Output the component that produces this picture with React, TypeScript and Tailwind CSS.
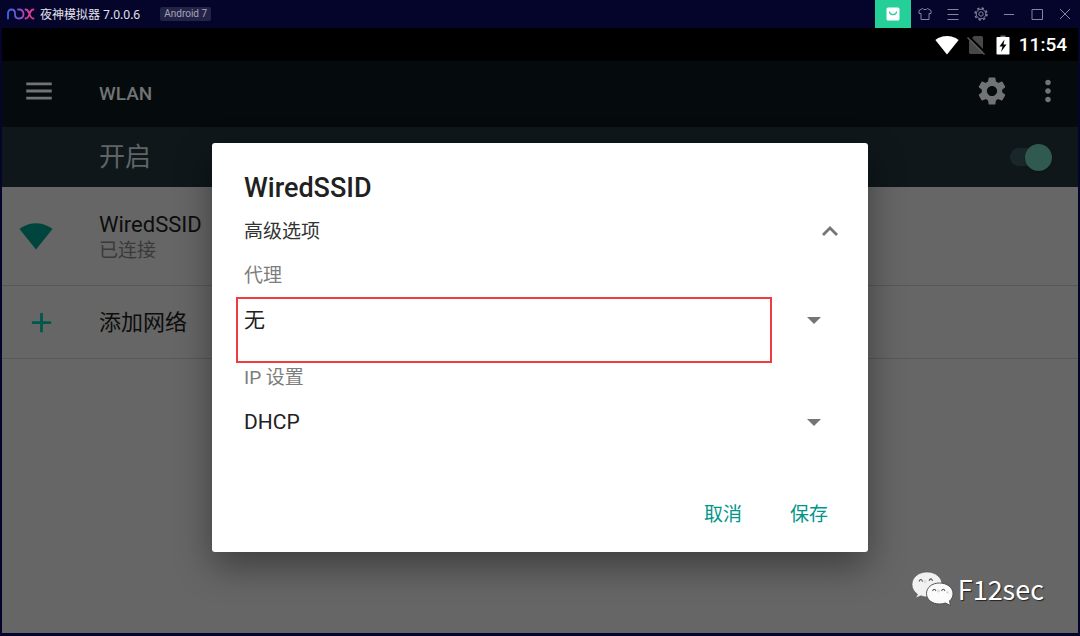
import { useState } from "react";
import type { ReactNode } from "react";
import { MdAdd, MdMenu, MdMoreVert, MdSettings, MdSignalWifi4Bar } from "react-icons/md";

function NoxLogo() {
  return (
    <svg width="28" height="12" viewBox="0 0 28 12" fill="none" strokeWidth="1.800" strokeLinecap="round" aria-hidden="true">
      <defs>
        <linearGradient id="nox" x1="0" y1="0" x2="28" y2="0" gradientUnits="userSpaceOnUse">
          <stop offset="0" stopColor="#2f6fe0" />
          <stop offset="0.5" stopColor="#8a4fd0" />
          <stop offset="0.75" stopColor="#e0409c" />
          <stop offset="1" stopColor="#e0357f" />
        </linearGradient>
      </defs>
      <path
        stroke="url(#nox)"
        d="M1 10.500V5.500C1 3 2.300 1.500 4.500 1.500S8 3 8 5.500V6.500C8 9 9.500 10.500 12 10.500S16.500 9 16.500 6S14.800 1.500 12 1.500H11M18.500 1.500C20.500 1.500 21.500 3 22.500 6S24.500 10.500 26.500 10.500M26.500 1.500C24.500 1.500 23.500 3 22.500 6S20.500 10.500 18.500 10.500"
      />
    </svg>
  );
}

function WindowButton({ label, children }: { label: string; children: ReactNode }) {
  return (
    <button type="button" aria-label={label} className="flex h-7 w-7 items-center justify-center text-[#85859b]">
      <svg width="14" height="14" viewBox="0 0 14 14" fill="none" stroke="currentColor" strokeWidth="1">
        {children}
      </svg>
    </button>
  );
}

function TitleBar() {
  return (
    <header className="flex h-7 items-center pl-[7px] pr-px">
      <NoxLogo />
      <h1 className="ml-[5px] mt-0.5 font-['Noto_Sans','Noto_Sans_CJK_SC',sans-serif] text-[12px] leading-4 text-[#e2e2ea]">
        夜神模拟器 7.0.0.6
      </h1>
      <span className="ml-5 rounded-xs bg-[#232347] px-1 text-[10px] leading-[14px] text-[#a5a5b8]">Android 7</span>
      <div className="ml-auto flex">
        <button type="button" aria-label="应用中心" className="flex h-7 w-9 items-center justify-center bg-[#25cf98]">
          <svg width="14" height="14" viewBox="0 0 14 14">
            <rect x="0.500" y="0.500" width="13" height="13" rx="1.500" fill="#fff" />
            <path d="M3.500 4.500a3.500 3 0 0 0 7 0" fill="none" stroke="#25cf98" strokeWidth="1.300" />
          </svg>
        </button>
        <WindowButton label="主题">
          <path d="M4.500 1.500C5.500 3 8.500 3 9.500 1.500L13 3.500V6.500H11V12.500H3V6.500H1V3.500Z" strokeLinejoin="round" />
        </WindowButton>
        <WindowButton label="菜单">
          <path d="M1.500 2.500H12.500M1.500 7.500H12.500M1.500 12.500H12.500" />
        </WindowButton>
        <WindowButton label="系统设置">
          <circle cx="7" cy="7" r="2.200" />
          <circle cx="7" cy="7" r="4.800" />
          <circle cx="7" cy="7" r="6" strokeDasharray="2.300 2.412" strokeWidth="1.400" />
        </WindowButton>
        <WindowButton label="最小化">
          <path d="M2 7.500H12" />
        </WindowButton>
        <WindowButton label="最大化">
          <path d="M2 2.500H12.500V12.500H2Z" />
        </WindowButton>
        <WindowButton label="关闭">
          <path d="M2 2L12 12M12 2L2 12" />
        </WindowButton>
      </div>
    </header>
  );
}

function StatusBar() {
  return (
    <div className="flex h-[33px] items-center justify-end bg-black pr-[11px] text-white">
      <MdSignalWifi4Bar size={24} aria-hidden="true" />
      <svg className="ml-2" width="19" height="20" viewBox="0 0 19 20" aria-hidden="true">
        <path d="M7 1H14.500Q16 1 16 2.500V17.500Q16 19 14.500 19H3.500Q2 19 2 17.500V6Z" fill="#474747" />
        <path d="M1.500 1L19 18.500" stroke="#000" strokeWidth="2" />
        <path d="M0.500 2.500L17.500 19.500" stroke="#5a5a5a" strokeWidth="1.400" />
      </svg>
      <svg className="ml-2.5" width="14" height="20" viewBox="0 0 14 20" aria-hidden="true">
        <path d="M4.500 0.500H9.500V2.500H4.500Z" fill="#777" />
        <rect x="0.500" y="2" width="13" height="17.500" rx="0.800" fill="#fff" />
        <path d="M8.500 4.500L3.500 11.500H6.500L5 17L10.500 9.500H7.500Z" fill="#000" />
      </svg>
      <span className="ml-[9px] text-[19px] font-medium leading-6">11:54</span>
    </div>
  );
}

function AppBar() {
  return (
    <div className="flex h-[66px] items-center bg-[#050a0c] pb-1.5 pl-5 pr-[13px] text-[#717374]">
      <button type="button" aria-label="导航菜单">
        <MdMenu size={34} />
      </button>
      <h2 className="ml-[43px] mt-1.5 text-[19px] font-medium leading-6">WLAN</h2>
      <button type="button" aria-label="设置" className="ml-auto">
        <MdSettings size={34} />
      </button>
      <button type="button" aria-label="更多选项" className="ml-[22px]">
        <MdMoreVert size={34} />
      </button>
    </div>
  );
}

function SwitchBar() {
  const [on, setOn] = useState(true);
  return (
    <label className="flex h-[60px] items-center justify-between bg-[#0f171a] pl-[97px] pr-[26px]">
      <span className="text-[26px] leading-8 text-[#5f6466]">开启</span>
      <input type="checkbox" className="peer sr-only" checked={on} onChange={() => setOn(!on)} />
      <span className="flex h-[18px] w-[42px] items-center justify-start rounded-full bg-linear-to-r from-[#19272a] from-80% to-transparent to-80% peer-checked:justify-end">
        <span className="h-[27px] w-[27px] rounded-full bg-[#30594f] shadow-sm" />
      </span>
    </label>
  );
}

function NetworkList() {
  return (
    <ul className="text-[#0d0d0d]">
      <li className="flex h-[99px] items-center border-b border-[#585858]">
        <span className="flex w-[97px] pl-[17px] text-[#00453d]">
          <MdSignalWifi4Bar size={34} aria-hidden="true" />
        </span>
        <div className="pt-0.5">
          <p className="text-[22px] leading-7">WiredSSID</p>
          <p className="text-[19px] leading-6 text-[#3a3a3a]">已连接</p>
        </div>
      </li>
      <li className="flex h-[73px] items-center border-b border-[#585858]">
        <span className="flex w-[97px] pl-[23px] text-[#00574c]">
          <MdAdd size={33} aria-hidden="true" />
        </span>
        <p className="pt-0.5 text-[22px] leading-7">添加网络</p>
      </li>
    </ul>
  );
}

type FieldProps = { id: string; label: string; options: string[]; highlighted?: boolean };

function SelectField({ id, label, options, highlighted }: FieldProps) {
  return (
    <div>
      <label htmlFor={id} className="flex h-[38px] items-center text-[19px] leading-6 text-[#7d7d7d]">
        {label}
      </label>
      <div className="relative flex h-[52px] items-center">
        <select id={id} className="h-full w-full appearance-none bg-transparent text-[21px] text-[#212121] outline-none">
          {options.map((option) => (
            <option key={option}>{option}</option>
          ))}
        </select>
        <svg className="pointer-events-none absolute right-[15px]" width="14" height="7" viewBox="0 0 14 7" aria-hidden="true">
          <path d="M0 0H14L7 7Z" fill="#757575" />
        </svg>
        {highlighted && (
          <span className="pointer-events-none absolute -left-2 right-16 top-[2px] h-[66px] border-[2px] border-[#f43b3b]" />
        )}
      </div>
    </div>
  );
}

function NetworkDialog() {
  return (
    <form
      role="dialog"
      aria-labelledby="dialog-title"
      onSubmit={(event) => event.preventDefault()}
      className="w-full max-w-[656px] rounded-[3px] bg-white px-8 pb-[15px] pt-[26px] shadow-[0_14px_36px_rgba(0,0,0,0.4)]"
    >
      <h2 id="dialog-title" className="text-[27px] font-medium leading-[38px] text-[#212121]">
        WiredSSID
      </h2>
      <button type="button" aria-expanded="true" className="flex h-[50px] w-full items-center justify-between text-[19px] leading-6 text-[#333333]">
        高级选项
        <svg className="-mr-0.5" width="16" height="12" viewBox="0 0 16 12" fill="none" stroke="#757575" strokeWidth="2.800" aria-hidden="true">
          <path d="M1 9L8 2L15 9" />
        </svg>
      </button>
      <div className="grid gap-3">
        <SelectField id="proxy" label="代理" options={["无", "手动", "自动配置"]} highlighted />
        <SelectField id="ip" label="IP 设置" options={["DHCP", "静态"]} />
      </div>
      <div className="mt-11 flex justify-end gap-8 text-[19px] leading-6 text-[#009688]">
        <button type="button" className="h-11 px-2">
          取消
        </button>
        <button type="submit" className="h-11 px-2">
          保存
        </button>
      </div>
    </form>
  );
}

function Watermark() {
  return (
    <div className="absolute bottom-[26px] right-[34px] flex items-center gap-1">
      <svg width="43" height="36" viewBox="0 0 43 36" aria-hidden="true">
        <path
          d="M16 1C7.500 1 1 6.500 1 13.500C1 17.500 3.200 21 6.500 23.200L4.500 27L10 24.800Q13 26 16 26C24.500 26 31 20.500 31 13.500S24.500 1 16 1Z"
          fill="#f1f1f1"
          stroke="#555"
          strokeWidth="0.600"
        />
        <g fill="none" stroke="#555" strokeWidth="1.100">
          <path d="M8 10.500Q9.800 6.500 11.600 10.500M18 9.800Q19.800 6 21.600 9.800" />
        </g>
        <path
          d="M28.500 12C21 12 15.500 16.500 15.500 22.500S21 33 28.500 33Q31.500 33 34.500 32L39.500 34.500L38.500 30C40.800 28 42 25.500 42 22.500C42 16.500 36 12 28.500 12Z"
          fill="#fbfbfb"
          stroke="#444"
          strokeWidth="0.900"
        />
        <g fill="none" stroke="#555" strokeWidth="1.100">
          <path d="M21.500 20Q23.200 16.500 25 20M30.500 20Q32.200 16.500 34 20" />
        </g>
        <g fill="#dcdcdc">
          <circle cx="14" cy="10.500" r="1.500" />
          <circle cx="27.500" cy="20" r="1.500" />
          <circle cx="36.500" cy="21.500" r="1.300" />
        </g>
      </svg>
      <span className="font-['Noto_Sans_CJK_SC',sans-serif] text-[27px] leading-8 text-white [text-shadow:1px_1px_1px_#222]">F12sec</span>
    </div>
  );
}

export default function App() {
  return (
    <div className="flex min-h-screen flex-col bg-[#05052b] font-[Roboto,'Noto_Sans_CJK_SC',sans-serif]">
      <TitleBar />
      <div className="mx-[2px] mb-[3px] flex grow flex-col bg-[#666666]">
        <StatusBar />
        <main className="relative grow">
          <AppBar />
          <SwitchBar />
          <NetworkList />
          <div className="absolute inset-0 flex items-center justify-center">
            <NetworkDialog />
          </div>
          <Watermark />
        </main>
      </div>
    </div>
  );
}
